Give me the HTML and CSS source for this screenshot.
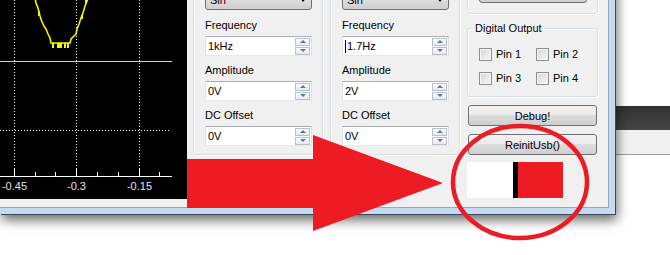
FILE: index.html
```html
<!DOCTYPE html>
<html lang="en">
<head>
  <meta charset="UTF-8" />
  <meta name="viewport" content="width=device-width, initial-scale=1.0"/>
  <title>USB Signal Generator</title>
  <link rel="stylesheet" href="styles.css">
</head>
<body>
  <div class="desktop">
    <div class="bar"></div>
    <div class="strip"></div>

    <div class="window">
      <div class="client">

        <div class="scope">
          <svg width="187" height="229" viewBox="0 -30 187 229">
            <g stroke="#fff" stroke-width="1" stroke-dasharray="1 2">
              <line x1="14.5" y1="-30" x2="14.5" y2="170"/>
              <line x1="76.5" y1="-30" x2="76.5" y2="170"/>
              <line x1="139.5" y1="-30" x2="139.5" y2="170"/>
              <line x1="0" y1="130.5" x2="171" y2="130.5"/>
            </g>
            <line x1="0" y1="61.5" x2="172" y2="61.5" stroke="#d2d2d2"/>
            <polyline fill="none" stroke="#f5f500" stroke-width="1.6" points="35,-2 36,3 38,8 39,12 40,16 42,22 44,26 46,29 48,34 50,38 51,43 70,43 71,39 73,37 76,34 77,29 79,24 81,18 83,13 85,6 87,1 88,-2"/>
            <g fill="#f5f500">
              <rect x="38" y="11" width="2" height="5"/>
              <rect x="52" y="43" width="2" height="5"/>
              <rect x="57" y="43" width="5" height="5"/>
              <rect x="64" y="43" width="2" height="5"/>
              <rect x="67" y="43" width="2" height="5"/>
              <rect x="81" y="15" width="2" height="4"/>
              <rect x="85" y="-2" width="2" height="6"/>
            </g>
            <g stroke="#fff" stroke-width="1">
              <line x1="0" y1="176.5" x2="172" y2="176.5"/>
              <line x1="14.5" y1="169" x2="14.5" y2="176"/>
              <line x1="35.5" y1="172" x2="35.5" y2="176"/>
              <line x1="55.5" y1="172" x2="55.5" y2="176"/>
              <line x1="76.5" y1="169" x2="76.5" y2="176"/>
              <line x1="97.5" y1="172" x2="97.5" y2="176"/>
              <line x1="118.5" y1="172" x2="118.5" y2="176"/>
              <line x1="139.5" y1="169" x2="139.5" y2="176"/>
              <line x1="159.5" y1="172" x2="159.5" y2="176"/>
            </g>
            <g class="ticks" fill="#e4e4e4" text-anchor="middle">
              <text x="14.5" y="190">-0.45</text>
              <text x="76.5" y="190">-0.3</text>
              <text x="139.5" y="190">-0.15</text>
            </g>
          </svg>
        </div>

        <div class="group channel">
          <div class="combo"><span>Sin</span><span class="drop"></span></div>
          <label class="first">Frequency</label>
          <div class="spin"><span>1kHz</span><span class="arrows"><i class="up"></i><i class="down"></i></span></div>
          <label>Amplitude</label>
          <div class="spin"><span>0V</span><span class="arrows"><i class="up"></i><i class="down"></i></span></div>
          <label>DC Offset</label>
          <div class="spin"><span>0V</span><span class="arrows"><i class="up"></i><i class="down"></i></span></div>
        </div>

        <div class="group channel second">
          <div class="combo"><span>Sin</span><span class="drop"></span></div>
          <label class="first">Frequency</label>
          <div class="spin"><span class="caret"></span><span>1.7Hz</span><span class="arrows"><i class="up"></i><i class="down"></i></span></div>
          <label>Amplitude</label>
          <div class="spin"><span>2V</span><span class="arrows"><i class="up"></i><i class="down"></i></span></div>
          <label>DC Offset</label>
          <div class="spin"><span>0V</span><span class="arrows"><i class="up"></i><i class="down"></i></span></div>
        </div>

        <div class="side">
          <div class="group topbox"><div class="btn small"></div></div>
          <fieldset class="digital">
            <legend>Digital Output</legend>
            <div class="pins">
              <div class="pin"><span class="box"></span>Pin 1</div>
              <div class="pin"><span class="box"></span>Pin 2</div>
              <div class="pin"><span class="box"></span>Pin 3</div>
              <div class="pin"><span class="box"></span>Pin 4</div>
            </div>
          </fieldset>
          <div class="btn">Debug!</div>
          <div class="btn">ReinitUsb()</div>
          <div class="status">
            <span class="off"></span><span class="edge"></span><span class="on"></span>
          </div>
        </div>

      </div>
    </div>

    <!-- paint annotations on top of the screenshot -->
    <svg class="marks" width="670" height="255" viewBox="0 0 670 255">
      <polygon fill="#ed1c24" points="187,159 313,159 313,135 443,183 313,231 313,208 187,208"/>
      <ellipse cx="520" cy="182" rx="67" ry="56" fill="none" stroke="#ed1c24" stroke-width="4.5"/>
    </svg>
  </div>
</body>
</html>
```

FILE: styles.css
```css
body { margin: 0; font-family: "Liberation Sans", Arial, sans-serif; font-size: 11px; color: #000; }
.desktop { position: relative; width: 670px; height: 255px; overflow: hidden; background: #fff; }
.bar { margin-top: 106px; height: 24px; background: linear-gradient(#323232, #454545); }
.strip { height: 24px; background: #f0f0f0; border-bottom: 1px solid #a0a0a0; }

.window {
  position: absolute; left: 0; top: -30px;
  border-right: 6px solid #c3dbf3; border-bottom: 6px solid #c3dbf3;
  box-shadow: 1px 1px 0 #3c4a58, 2px 6px 11px rgba(0,0,0,.6);
}
.client {
  display: flex; align-items: flex-start;
  width: 608px; height: 237px; background: #f0f0f0;
  border-right: 1px solid #98a9bb; border-bottom: 1px solid #98a9bb;
}

.scope { width: 187px; height: 229px; background: #000; }
.scope svg { display: block; }
.ticks { font-family: "Liberation Sans", Arial, sans-serif; font-size: 11px; }

.group {
  box-sizing: border-box; border: 1px solid #d5dfe5; border-radius: 3px;
  box-shadow: inset 1px 1px 0 #fff, 1px 1px 0 #fff;
}
.channel { width: 130px; margin: 5px 0 0 6px; padding: 13px 10px 8px 11px; }
.channel.second { margin-left: 7px; }
.channel label { display: block; line-height: 13px; margin: 8px 0 4px; }
.channel label.first { margin-top: 9px; }

.combo {
  display: flex; align-items: center; box-sizing: border-box; height: 21px; padding: 0 4px;
  border: 1px solid #707070; border-radius: 3px;
  background: linear-gradient(#f2f2f2, #ebebeb 48%, #dddddd 52%, #cfcfcf);
}
.drop {
  margin-left: auto; margin-right: 1px; width: 0; height: 0;
  border-top: 4px solid #000; border-left: 3px solid transparent; border-right: 3px solid transparent;
}

.spin {
  display: flex; align-items: center; box-sizing: border-box; height: 20px; padding-left: 2px;
  border: 1px solid; border-color: #abadb3 #dbdfe6 #e3e9ef #e2e3ea; background: #fff;
}
.caret { width: 1px; height: 13px; background: #000; margin-right: 1px; }
.arrows { margin-left: auto; margin-right: 1px; display: flex; flex-direction: column; gap: 1px; }
.arrows i {
  display: flex; align-items: center; justify-content: center;
  width: 15px; height: 8px; box-sizing: border-box;
  border: 1px solid #b8c0cc; background: linear-gradient(#fdfdfd, #e6e9ee);
}
.arrows i::before { content: ""; width: 0; height: 0; border-left: 3px solid transparent; border-right: 3px solid transparent; }
.arrows .up::before { border-bottom: 3px solid #5a72b0; }
.arrows .down::before { border-top: 3px solid #5a72b0; }

.side { width: 131px; margin: 5px 0 0 7px; display: flex; flex-direction: column; }
.topbox { height: 39px; padding: 4px 10px 0 11px; }
.btn {
  display: flex; align-items: center; justify-content: center;
  box-sizing: border-box; height: 21px; margin: 8px 1px 0;
  border: 1px solid #707070; border-radius: 3px;
  background: linear-gradient(#f2f2f2, #ebebeb 45%, #dddddd 50%, #cfcfcf);
}
.btn.small { height: 23px; margin: 0; }

.digital {
  margin: 8px 0 0; min-width: 0; padding: 13px 10px 11px 11px;
  border: 1px solid #d5dfe5; border-radius: 3px;
  box-shadow: inset 1px 1px 0 #fff, 1px 1px 0 #fff;
}
.digital legend { margin-left: -6px; padding: 0 2px; line-height: 13px; }
.pins { display: grid; grid-template-columns: 57px auto; row-gap: 11px; }
.pin { display: flex; align-items: center; gap: 4px; height: 13px; line-height: 13px; }
.box {
  width: 13px; height: 13px; box-sizing: border-box;
  border: 1px solid #8e8f8f; box-shadow: inset 0 0 0 1px #f4f4f4;
  background: linear-gradient(135deg, #d6d6d6, #f8f8f8);
}

.status { display: flex; height: 36px; margin-top: 7px; }
.status .off { width: 46px; background: #fff; }
.status .edge { width: 5px; background: #000; }
.status .on { width: 45px; background: #ed1c24; }

.marks { position: absolute; left: 0; top: 0; pointer-events: none; }
```
